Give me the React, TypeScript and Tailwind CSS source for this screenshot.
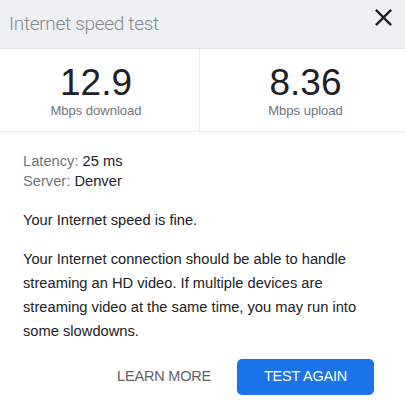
import React from 'react';

const stats = [
  { value: '12.9', label: 'Mbps download' },
  { value: '8.36', label: 'Mbps upload' },
];

const App: React.FC = () => {
  return (
    <div className="w-[405px] h-[400px] bg-white overflow-hidden font-['Liberation_Sans',Arial,sans-serif]">
      {/* Header */}
      <div className="h-[49px] flex items-center justify-between pl-[9px] bg-[#eef1f3] border-b border-[#dfe2e5]">
        <h1 className="text-[19px] font-light text-[#868a8e] font-['Roboto',sans-serif] tracking-[-0.3px]">
          Internet speed test
        </h1>
        <button className="self-start mt-[3px] mr-[7px] w-[29px] h-[29px] text-[#202124]">
          <svg viewBox="0 0 24 24" className="w-[29px] h-[29px]" fill="currentColor">
            <path d="M19 6.41L17.59 5 12 10.59 6.41 5 5 6.41 10.59 12 5 17.59 6.41 19 12 13.41 17.59 19 19 17.59 13.41 12z" />
          </svg>
        </button>
      </div>

      {/* Stats */}
      <div className="grid grid-cols-[200px_1fr] border-b border-[#ececec]">
        {stats.map((s, i) => (
          <div
            key={s.label}
            className={`flex flex-col items-center pt-[14px] pb-[12px] ${
              i === 0 ? 'border-r border-[#ececec] pr-[7px]' : 'pl-[6px]'
            }`}
          >
            <span className="text-[37px] leading-[40px] text-[#202124]">{s.value}</span>
            <span className="text-[13px] leading-[16px] text-[#70757a]">{s.label}</span>
          </div>
        ))}
      </div>

      {/* Details */}
      <div className="px-[23px] pt-[19px] text-[14.7px] text-[#202124]">
        <div className="leading-[20px]">
          <p>
            <span className="text-[#70757a]">Latency:</span> 25 ms
          </p>
          <p>
            <span className="text-[#70757a]">Server:</span> Denver
          </p>
        </div>
        <p className="mt-[17px] leading-[24px]">Your Internet speed is fine.</p>
        <p className="mt-[15px] leading-[24px] pr-[8px]">
          Your Internet connection should be able to handle streaming an HD video. If multiple devices are
          streaming video at the same time, you may run into some slowdowns.
        </p>
      </div>

      {/* Actions */}
      <div className="flex justify-end items-center gap-[26px] pr-[31px] mt-[16px]">
        <button className="text-[14.5px] text-[#5f6368] tracking-[-0.2px]">LEARN MORE</button>
        <button className="h-[36px] w-[137px] rounded-[5px] bg-[#1a73e8] text-white text-[14.5px] tracking-[-0.2px]">
          TEST AGAIN
        </button>
      </div>
    </div>
  );
};

export default App;
